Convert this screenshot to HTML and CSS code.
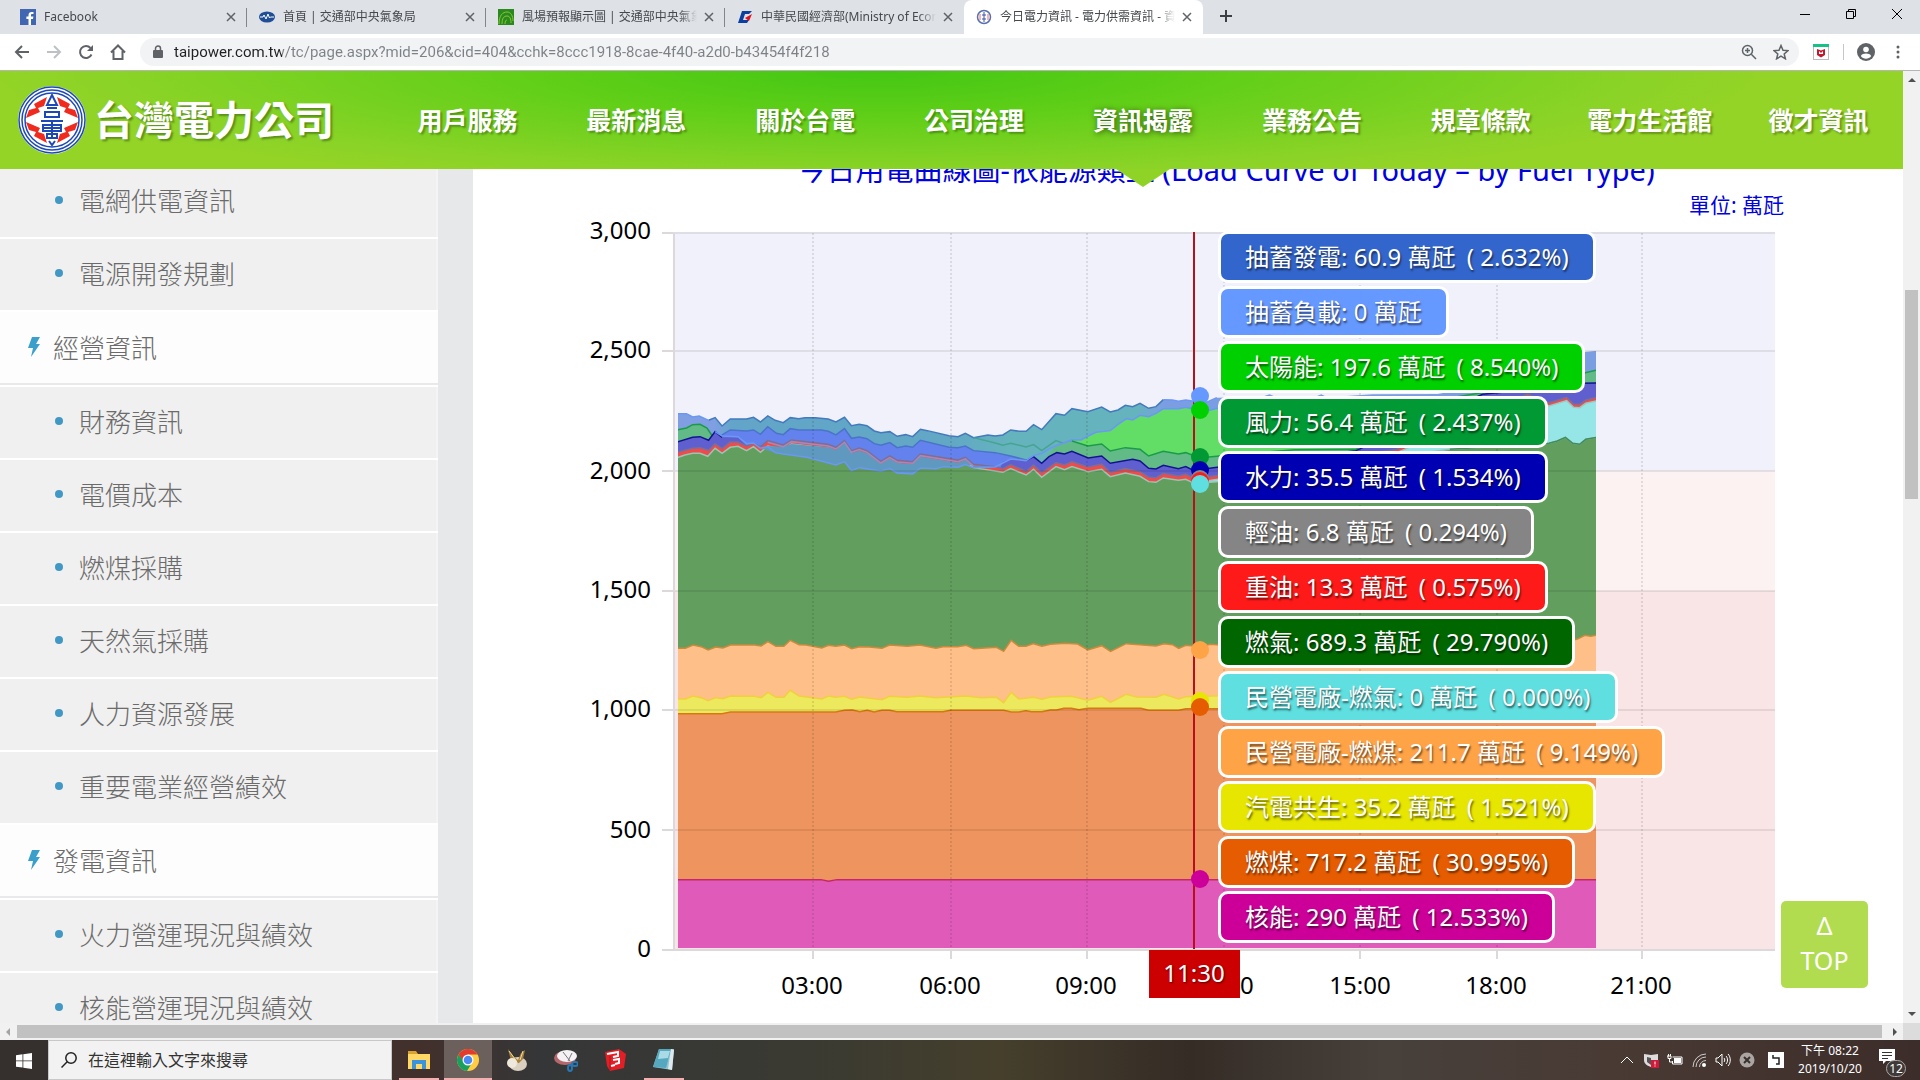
FILE: index.html
```
<!DOCTYPE html>
<html lang="zh-Hant">
<head>
    <meta charset="UTF-8">
    <meta name="viewport" content="width=device-width, initial-scale=1.0">
    <title>今日電力資訊 - 電力供需資訊 - 資訊揭露</title>
    <link rel="stylesheet" href="styles.css">
</head>
<body>
    <!-- Browser tabs -->
    <div class="tab-strip">
        <div class="tab">
            <svg class="favicon" viewBox="0 0 16 16"><rect width="16" height="16" fill="#4267b2"/><path d="M11 16V10h2l.4-2.400H11V6.300c0-.8.3-1.200 1.200-1.200h1.300V3c-.4 0-1-.1-1.800-.1C9.700 2.900 8.500 4 8.500 6v1.600H6.400V10h2.100v6z" fill="#fff"/></svg>
            <span class="tab-title">Facebook</span>
            <button class="tab-close" aria-label="關閉分頁"><svg viewBox="0 0 10 10"><path d="M1 1l8 8M9 1l-8 8"/></svg></button>
        </div>
        <div class="tab">
            <svg class="favicon" viewBox="0 0 16 16"><ellipse cx="8" cy="8" rx="8" ry="5.500" fill="#1f4e96"/><path d="M1 8h3l1-2 2 4 2-5 1.500 4 1-1H15" fill="none" stroke="#fff"/></svg>
            <span class="tab-title">首頁 | 交通部中央氣象局</span>
            <button class="tab-close" aria-label="關閉分頁"><svg viewBox="0 0 10 10"><path d="M1 1l8 8M9 1l-8 8"/></svg></button>
        </div>
        <div class="tab">
            <svg class="favicon" viewBox="0 0 16 16"><rect width="16" height="16" fill="#2b8a1e"/><path d="M1 15C1 6 5 3 9 3s6 4 6 9M4 15c0-6 2-8 5-8s4 3 4 7M7 15c0-3 1-4 2-4" fill="none" stroke="#8cc63a"/></svg>
            <span class="tab-title">風場預報顯示圖 | 交通部中央氣象局</span>
            <button class="tab-close" aria-label="關閉分頁"><svg viewBox="0 0 10 10"><path d="M1 1l8 8M9 1l-8 8"/></svg></button>
        </div>
        <div class="tab tab-last">
            <svg class="favicon" viewBox="0 0 16 16"><path d="M5 2h10l-3 3H8l-2 6h6l-2 3H1z" fill="#0b3fa0"/><path d="M15 5l-7 4 4 3z" fill="#e01020"/></svg>
            <span class="tab-title">中華民國經濟部(Ministry of Economic Affairs)</span>
            <button class="tab-close" aria-label="關閉分頁"><svg viewBox="0 0 10 10"><path d="M1 1l8 8M9 1l-8 8"/></svg></button>
        </div>
        <div class="tab tab-active">
            <svg class="favicon" viewBox="0 0 16 16"><circle cx="8" cy="8" r="6.500" fill="#fff" stroke="#5a6fae" stroke-width="1.500"/><path d="M8 3v10M6 6h4M6 10h4" stroke="#3b54b0"/><path d="M4 5v6M12 5v6" stroke="#e0707a"/></svg>
            <span class="tab-title">今日電力資訊 - 電力供需資訊 - 資訊揭露</span>
            <button class="tab-close" aria-label="關閉分頁"><svg viewBox="0 0 10 10"><path d="M1 1l8 8M9 1l-8 8"/></svg></button>
        </div>
        <button class="new-tab" aria-label="新分頁"><svg viewBox="0 0 12 12"><path d="M6 0v12M0 6h12"/></svg></button>
        <div class="window-buttons">
            <button aria-label="最小化"><svg viewBox="0 0 10 10"><path d="M0 5.500h10"/></svg></button>
            <button aria-label="還原"><svg viewBox="0 0 10 10"><path d="M.5 2.500h7v7h-7zM2.500 2.500v-2h7v7h-2"/></svg></button>
            <button aria-label="關閉"><svg viewBox="0 0 10 10"><path d="M0 0l10 10M10 0L0 10"/></svg></button>
        </div>
    </div>

    <!-- Address bar -->
    <div class="toolbar">
        <button class="tool" aria-label="上一頁"><svg viewBox="0 0 16 16"><path d="M15 8H2M8 2L2 8l6 6"/></svg></button>
        <button class="tool tool-off" aria-label="下一頁"><svg viewBox="0 0 16 16"><path d="M1 8h13M8 2l6 6-6 6"/></svg></button>
        <button class="tool" aria-label="重新載入"><svg viewBox="0 0 16 16"><path d="M13.500 10.500A6 6 0 1 1 12.500 4"/><path d="M15 1v6H9z" fill="#5f6368" stroke="none"/></svg></button>
        <button class="tool" aria-label="首頁"><svg viewBox="0 0 16 16"><path d="M1 8.500L8 1.500l7 7M3.500 7v8h9V7"/></svg></button>
        <div class="omnibox">
            <svg class="lock" viewBox="0 0 10 14"><rect x="0" y="5" width="10" height="8" rx="1" fill="#5f6368"/><path d="M2.500 5.500V3.500a2.500 2.500 0 0 1 5 0v2" fill="none" stroke="#5f6368" stroke-width="1.500"/></svg>
            <input class="url" type="text" aria-label="網址" value="taipower.com.tw/tc/page.aspx?mid=206&amp;cid=404&amp;cchk=8ccc1918-8cae-4f40-a2d0-b43454f4f218">
            <button class="tool" aria-label="縮放"><svg viewBox="0 0 16 16"><g stroke-width="1.500"><circle cx="6.500" cy="6.500" r="5"/><path d="M10.300 10.300L15 15M4 6.500h5M6.500 4v5"/></g></svg></button>
            <button class="tool" aria-label="加入書籤"><svg viewBox="0 0 16 16"><path d="M8 1.500l2 4.700 5 .4-3.800 3.300 1.200 4.900L8 12.200l-4.400 2.600 1.200-4.900L1 6.600l5-.4z" stroke-width="1.500"/></svg></button>
        </div>
        <button class="tool tool-shield" aria-label="擴充功能"><svg viewBox="0 0 16 16"><g stroke="none"><rect width="16" height="16" fill="#bbb"/><rect x="1" y="1" width="14" height="14" fill="#fff"/><path d="M0 0h16v3H0z" fill="#17c287"/><path d="M4 5l4 1.500L12 5v6l-4 2.500L4 11z" fill="#c0182c"/><path d="M6 7v3h4V7L8 9z" fill="#fff"/></g></svg></button>
        <span class="tool-line"></span>
        <button class="tool tool-user" aria-label="使用者"><svg viewBox="0 0 18 18"><circle cx="9" cy="9" r="9" fill="#5f6368" stroke="none"/><circle cx="9" cy="6.500" r="2.800" fill="#fff" stroke="none"/><path d="M3.800 13c1-2 3-2.600 5.200-2.600s4.200.6 5.200 2.600C13 14.800 11 15.800 9 15.800S5 14.800 3.800 13z" fill="#fff" stroke="none"/></svg></button>
        <button class="tool tool-menu" aria-label="選單"><svg viewBox="0 0 16 16"><g fill="#5f6368" stroke="none"><circle cx="8" cy="3" r="1.500"/><circle cx="8" cy="8" r="1.500"/><circle cx="8" cy="13" r="1.500"/></g></svg></button>
    </div>

    <div class="viewport">
        <div class="page">
            <header class="site-header">
                <a class="logo" href="#">
                    <svg class="emblem" viewBox="0 0 68 68">
                        <circle cx="34" cy="34" r="34" fill="#fff"/>
                        <g fill="none" stroke="#1d49b8" stroke-width="1.500"><circle cx="34" cy="34" r="33"/><circle cx="34" cy="34" r="30"/><circle cx="34" cy="34" r="27"/></g>
                        <g fill="#f02a1c">
                            <path d="M29 11L16 18l2 4-7 2-3 8 14-6-2-4 6-2z"/>
                            <path d="M39 11l13 7-2 4 7 2 3 8-14-6 2-4-6-2z"/>
                            <path d="M29 57l-13-7 2-4-7-2-3-8 14 6-2 4 6 2z"/>
                            <path d="M39 57l13-7-2-4 7-2 3-8-14 6 2 4-6 2z"/>
                        </g>
                        <g fill="none" stroke="#1d49b8" stroke-width="2"><path d="M34 9l-5 10h10zM29 22h10M27 26h14v5H27zM23 35h22M25 39h18v6H25zM25 42h18M34 35v18M29 48h10v4H29zM31 55l3 4 3-4"/></g>
                    </svg>
                    <span class="logo-text">台灣電力公司</span>
                </a>
                <nav class="main-nav">
                    <a href="#">用戶服務</a>
                    <a href="#">最新消息</a>
                    <a href="#">關於台電</a>
                    <a href="#">公司治理</a>
                    <a class="current" href="#">資訊揭露</a>
                    <a href="#">業務公告</a>
                    <a href="#">規章條款</a>
                    <a href="#">電力生活館</a>
                    <a href="#">徵才資訊</a>
                </nav>
            </header>

            <div class="content">
                <aside class="sidebar">
                    <ul class="side-menu">
                        <li><a href="#">電網供電資訊</a></li>
                        <li><a href="#">電源開發規劃</a></li>
                        <li class="group"><a href="#"><svg viewBox="0 0 12 20"><path d="M4 0h8L8 7h4L3 20l2-9H0z"/></svg>經營資訊</a></li>
                        <li><a href="#">財務資訊</a></li>
                        <li><a href="#">電價成本</a></li>
                        <li><a href="#">燃煤採購</a></li>
                        <li><a href="#">天然氣採購</a></li>
                        <li><a href="#">人力資源發展</a></li>
                        <li><a href="#">重要電業經營績效</a></li>
                        <li class="group"><a href="#"><svg viewBox="0 0 12 20"><path d="M4 0h8L8 7h4L3 20l2-9H0z"/></svg>發電資訊</a></li>
                        <li><a href="#">火力營運現況與績效</a></li>
                        <li><a href="#">核能營運現況與績效</a></li>
                    </ul>
                </aside>

                <main class="main">
                    <h2 class="chart-title">今日用電曲線圖-依能源類型 (Load Curve of Today – by Fuel Type)</h2>
                    <p class="unit">單位: 萬瓩</p>
                    <div class="chart">
                        <svg class="chart-svg" viewBox="473 215 1430 808">
                            <!-- background bands -->
                            <path d="M673 232h1102v239H673z" fill="#f1f1fb"/>
                            <path d="M673 471h1102v120H673z" fill="#fbf2f1"/>
                            <path d="M673 591h1102v358H673z" fill="#f9e5e5"/>
                            <defs>
                                <linearGradient id="pump">
                                    <stop offset="0" stop-color="#7f9fe2"/>
                                    <stop offset=".04" stop-color="#7f9fe2"/>
                                    <stop offset=".06" stop-color="#62a5c8"/>
                                    <stop offset=".3" stop-color="#62a8c5"/>
                                    <stop offset=".36" stop-color="#65b3bd"/>
                                    <stop offset=".5" stop-color="#65b3bd"/>
                                    <stop offset=".53" stop-color="#7b9ee3"/>
                                    <stop offset="1" stop-color="#7b9ee3"/>
                                </linearGradient>
                                <clipPath id="plot"><rect x="678" y="232" width="918" height="716"/></clipPath>
                            </defs>

                            <g clip-path="url(#plot)">
                            <!-- upper series: pumped storage, solar, wind, hydro, oil, gas -->
                            <g class="series" transform="translate(560 200) scale(.4082 .3333)">
                                <path fill="url(#pump)" d="M287 2247V641L310 641 325 651 341 648 364 661 380 653 397 678 417 657 457 657 474 652 491 666 509 648 527 661 547 668 564 653 585 656 600 653 625 653 657 657 676 666 697 652 714 677 733 673 752 677 770 693 786 698 808 695 826 709 847 704 864 710 883 688 900 692 953 707 975 710 993 700 1013 713 1048 705 1066 708 1085 705 1104 690 1125 694 1142 694 1160 674 1180 689 1215 641 1236 646 1254 626 1293 635 1327 621 1348 636 1367 630 1385 616 1403 620 1421 610 1442 625 1460 620 1478 599 1500 600 1515 604 1533 600 1553 604 1583 607 1609 593 1720 590 1738 583 1756 592 1850 590 1865 583 1880 592 1990 583 2150 582 2250 560 2400 500 2510 456 2541 453V2247z"/>
                                <path fill="none" stroke="#4379bd" d="M364 661L380 653 397 678 417 657 457 657 474 652 491 666 509 648 527 661 547 668 564 653 585 656 600 653 625 653 657 657 676 666 697 652 714 677 733 673 752 677 770 693 786 698 808 695 826 709 847 704 864 710 883 688 900 692 953 707 975 710 993 700 1013 713 1048 705 1066 708 1085 705 1104 690 1125 694 1142 694 1160 674 1180 689 1215 641 1236 646 1254 626 1293 635 1327 621 1348 636 1367 630 1385 616 1403 620 1421 610 1442 625 1460 620 1478 599"/>
                                <path fill="none" stroke="#6b97f5" d="M287 641L310 641 325 651 341 648 364 661M1478 599L1500 600 1515 604 1533 600 1553 604 1583 607 1609 593"/>
                                <path fill="#62dd66" stroke="#6b97f5" d="M1200 780L1220 735 1254 720 1276 720 1294 708 1313 697 1348 692 1367 673 1388 656 1403 660 1421 646 1442 650 1460 640 1478 626 1515 626 1533 622 1553 628 1583 634 1609 625 1700 640 1900 650 2100 640 2200 610 2300 600V840H1200z"/>
                                <path fill="#62bb87" stroke="#1b9b4a" d="M287 900V690L310 684 325 674 343 673 360 684 380 720V900z"/>
                                <path fill="none" stroke="#45a590" d="M1013 713L1066 729 1085 736 1104 730 1142 741 1160 734 1180 752 1215 722 1236 731 1254 723"/>
                                <path fill="#62bb87" d="M1180 790L1215 735 1254 723 1293 738 1327 732 1348 753 1385 743 1421 748 1442 768 1478 754 1515 762 1533 758 1553 767 1590 771 1640 765 1800 749 1950 748 2150 600 2400 550 2541 510V900H1180z"/>
                                <path fill="none" stroke="#1b9b4a" d="M1254 723L1293 738 1327 732 1348 753 1385 743 1421 748 1442 768 1478 754 1515 762 1533 758 1553 767 1590 771 1640 765 1800 749 1950 748 2150 600 2400 550 2541 510"/>
                                <path fill="#6482ee" stroke="#4a74c8" d="M380 800L397 705 417 690 457 693 474 690 491 703 509 680 530 700 547 704 564 686 585 690 640 690 657 694 676 705 697 686 714 715 733 711 752 716 770 731 786 736 808 728 826 743 847 738 864 742 883 721 953 742 975 743 993 738 1013 752 1066 758 1104 768 1142 780 1142 840H380z"/>
                                <path fill="#5f5fd0" d="M287 900V726L325 712 343 710 364 721 380 695 397 712 436 712 460 740V900zM1066 840L1085 785 1104 777 1142 782 1160 770 1180 790 1198 770 1217 758 1236 762 1254 754 1294 774 1327 768 1348 790 1403 778 1421 783 1442 805 1460 807 1478 796 1515 806 1533 800 1553 812 1600 803 1950 752 2260 583 2400 565 2500 550 2541 549V950H1066z"/>
                                <path fill="none" stroke="#13138f" d="M287 726L325 712 343 710 364 721 380 695 397 712M1142 782L1160 770 1180 790 1198 770 1217 758 1236 762 1254 754 1294 774 1327 768 1348 790 1403 778 1421 783 1442 805 1460 807 1478 796 1515 806 1533 800 1553 812 1600 803 1950 752 2260 583 2400 565 2500 550 2541 549"/>
                                <path fill="#f04a4a" stroke="#77719a" d="M287 900V757L325 745 343 743 364 751 380 731 397 746 417 726 436 726 457 738 474 731 491 740 509 722 547 735 567 720 657 733 676 742 697 722 714 752 733 744 752 752 786 784 808 768 826 781 864 785 883 762 975 780 993 772 1013 793 1066 800 1085 806 1104 794 1142 814 1160 795 1180 818 1215 788 1236 795 1254 785 1294 801 1327 792 1348 817 1385 806 1421 815 1442 831 1460 833 1478 820 1515 828 1533 822 1553 835 1600 828 2050 748 2370 583 2423 608 2466 592 2483 612 2498 613 2513 600 2541 592V950z"/>
                                <path fill="#96e6e8" stroke="#9ec7c4" d="M1553 850L1600 840 2050 758 2370 593 2423 618 2466 602 2483 622 2498 623 2513 610 2541 602V950H1553z"/>
                                <path fill="#629e5e" stroke="#9cc4b4" d="M287 2247V773L306 765 325 760 343 760 362 769 380 745 397 760 417 742 436 739 457 752 474 740 491 757 509 738 547 748 567 732 657 745 676 754 697 734 714 764 733 756 752 764 786 796 808 780 826 793 864 797 883 774 975 792 993 784 1013 803 1066 813 1085 817 1104 806 1142 825 1160 808 1180 832 1215 800 1236 809 1254 800 1294 815 1327 808 1348 830 1385 819 1421 829 1442 845 1460 847 1478 834 1515 841 1533 838 1553 850 1610 845 2180 748 2423 730 2443 723 2463 712 2481 730 2498 733 2513 718 2541 712V2247z"/>
                                <path fill="none" stroke="#3f8c5c" d="M2180 748L2423 730 2443 723 2463 712 2481 730 2498 733 2513 718 2541 712"/>
                                <!-- pumping load, drawn down over the gas area during the night -->
                                <path fill="#5f99c0" d="M491 745L509 738 547 740 567 732 657 742 676 750 697 730 714 760 733 752 752 760 786 792 808 776 826 789 864 793 883 770 975 788 993 780 1013 800 1066 801 993 794 975 802 940 800 921 806 883 804 864 822 826 819 808 806 786 813 733 803 714 812 697 785 676 795 605 772 547 762 527 758z"/>
                                <path fill="none" stroke="#a08abf" d="M509 727L547 740 567 725 657 738 676 747 697 727 714 757 733 749 752 757 786 789 808 773 826 786 864 790 883 767 975 785 993 777 1013 798"/>
                                <path fill="none" stroke="#6b97f5" d="M380 695L397 708 436 710 457 731 474 729 491 745 509 740 527 758 547 762 605 772 676 795 697 785 714 812 733 803 786 813 808 806 826 819 864 822 883 804 921 806 940 800 975 802 993 794 1013 803 1066 801 1104 777 1142 782 1160 767 1180 760 1200 745 1220 735 1254 720"/>
                            </g>

                            <!-- lower series: IPP coal, cogeneration, coal, nuclear -->
                            <g class="series" transform="translate(560 600) scale(.4209 .3333)">
                                <path fill="#febf88" stroke="#cc8a3c" d="M277 1047V145L298 145 316 135 335 140 352 150 370 141 387 144 405 135 462 135 478 138 494 125 513 139 532 139 547 121 568 134 585 135 622 144 638 136 655 139 676 135 693 146 712 140 735 141 765 145 783 135 825 139 855 135 893 145 910 140 945 140 965 136 983 146 1037 142 1054 154 1072 121 1090 139 1107 139 1125 131 1145 139 1165 133 1200 130 1230 132 1254 150 1287 137 1308 154 1345 131 1416 138 1435 131 1455 134 1470 145 1487 136 1521 140 1545 133 1568 135 2380 125 2416 118 2435 106 2449 109 2464 105V1047z"/>
                                <path fill="#ece95e" stroke="#f2cf3f" d="M277 1047V297L298 297 316 288 335 293 352 302 370 293 387 296 405 288 462 289 478 293 494 277 513 292 532 292 547 271 568 288 622 297 638 288 655 292 676 289 693 298 712 291 765 299 783 289 825 292 855 288 893 293 965 288 1000 293 1037 292 1054 308 1072 277 1090 297 1125 292 1145 298 1165 291 1215 289 1254 301 1287 289 1308 307 1345 283 1370 291 1416 292 1435 283 1470 297 1487 290 1568 287 2464 287V1047z"/>
                                <path fill="#ee945e" stroke="#d9780f" d="M277 1047V341L385 341 405 336 655 336 676 331 695 330 712 335 730 331 746 336 765 331 783 331 800 335 910 335 928 331 1054 331 1072 336 1090 336 1107 332 1120 335 1145 335 1165 330 1180 330 1197 325 1215 325 1233 329 1254 325 1380 325 1398 331 1470 331 1487 326 1568 326 2464 325V1047z"/>
                                <path fill="#df5ab9" stroke="#c4286a" d="M277 1047V839L620 839 638 844 658 839 2464 839V1047z"/>
                            </g>
                            </g>

                            <!-- grid and axes -->
                            <g fill="none" stroke="#000" stroke-opacity=".08" stroke-width="2">
                                <path d="M673 233h1102M673 351h1102M673 471h1102M673 591h1102M673 710h1102M673 830h1102"/>
                            </g>
                            <path class="grid-v" d="M813 233v716M951 233v716M1087 233v716M1224 233v716M1360 233v716M1497 233v716M1642 233v716"/>
                            <path d="M662 233h11M662 351h11M662 471h11M662 591h11M662 710h11M662 830h11M662 950h1113M674 233v717M813 950v9M951 950v9M1087 950v9M1224 950v9M1360 950v9M1497 950v9M1642 950v9" fill="none" stroke="#dcd8dc" stroke-width="2"/>
                            <g class="axis axis-y">
                                <text x="651" y="239">3,000</text>
                                <text x="651" y="358">2,500</text>
                                <text x="651" y="479">2,000</text>
                                <text x="651" y="598">1,500</text>
                                <text x="651" y="717">1,000</text>
                                <text x="651" y="838">500</text>
                                <text x="651" y="957">0</text>
                            </g>
                            <g class="axis">
                                <text x="812" y="994">03:00</text>
                                <text x="950" y="994">06:00</text>
                                <text x="1086" y="994">09:00</text>
                                <text x="1223" y="994">12:00</text>
                                <text x="1360" y="994">15:00</text>
                                <text x="1496" y="994">18:00</text>
                                <text x="1641" y="994">21:00</text>
                            </g>

                            <!-- cursor -->
                            <path d="M1194 232v717" stroke="#b90f1c" stroke-width="2"/>
                            <circle cx="1200" cy="396" r="9" fill="#6699ff"/>
                            <circle cx="1200" cy="410" r="9" fill="#00d000"/>
                            <circle cx="1200" cy="457" r="9" fill="#009933"/>
                            <circle cx="1200" cy="470" r="9" fill="#0000b3"/>
                            <circle cx="1200" cy="479" r="9" fill="#888"/>
                            <circle cx="1200" cy="481" r="9" fill="#ff1a1a"/>
                            <circle cx="1200" cy="484" r="9" fill="#5fdfe0"/>
                            <circle cx="1200" cy="650" r="9" fill="#ffa347"/>
                            <circle cx="1200" cy="701" r="9" fill="#e6e600"/>
                            <circle cx="1200" cy="707" r="9" fill="#e65c00"/>
                            <circle cx="1200" cy="879" r="9" fill="#cc0099"/>
                            <rect x="1149" y="950" width="91" height="48" fill="#cc0000"/>
                            <text class="cursor-time" x="1194" y="982">11:30</text>
                        </svg>

                        <ul class="balloons">
                            <li class="pump-gen">抽蓄發電: 60.9 萬瓩 <span>( 2.632%)</span></li>
                            <li class="pump-load">抽蓄負載: 0 萬瓩</li>
                            <li class="solar">太陽能: 197.6 萬瓩 <span>( 8.540%)</span></li>
                            <li class="wind">風力: 56.4 萬瓩 <span>( 2.437%)</span></li>
                            <li class="hydro">水力: 35.5 萬瓩 <span>( 1.534%)</span></li>
                            <li class="diesel">輕油: 6.8 萬瓩 <span>( 0.294%)</span></li>
                            <li class="fuel-oil">重油: 13.3 萬瓩 <span>( 0.575%)</span></li>
                            <li class="gas">燃氣: 689.3 萬瓩 <span>( 29.790%)</span></li>
                            <li class="ipp-gas">民營電廠-燃氣: 0 萬瓩 <span>( 0.000%)</span></li>
                            <li class="ipp-coal">民營電廠-燃煤: 211.7 萬瓩 <span>( 9.149%)</span></li>
                            <li class="cogen">汽電共生: 35.2 萬瓩 <span>( 1.521%)</span></li>
                            <li class="coal">燃煤: 717.2 萬瓩 <span>( 30.995%)</span></li>
                            <li class="nuclear">核能: 290 萬瓩 <span>( 12.533%)</span></li>
                        </ul>
                    </div>
                </main>
            </div>
            <a class="go-top" href="#">Δ<br>TOP</a>
        </div>

        <div class="scroll-y">
            <svg viewBox="0 0 8 4"><path d="M0 4l4-4 4 4z"/></svg>
            <span class="thumb"></span>
            <svg viewBox="0 0 8 4"><path d="M0 0l4 4 4-4z"/></svg>
        </div>
        <div class="scroll-x">
            <svg viewBox="0 0 4 8"><path d="M4 0L0 4l4 4z" fill="#a3a3a3"/></svg>
            <span class="thumb"></span>
            <svg viewBox="0 0 4 8"><path d="M0 0l4 4-4 4z"/></svg>
        </div>
        <div class="scroll-corner"></div>
    </div>

    <!-- Taskbar -->
    <footer class="taskbar">
        <button class="start" aria-label="開始"><svg viewBox="0 0 16 16"><path d="M0 2.200L6.500 1.300v6.200H0zM7.300 1.200L16 0v7.500H7.300zM0 8.300h6.500v6.300L0 13.700zM7.300 8.300H16V16l-8.700-1.300z" fill="#fff"/></svg></button>
        <label class="search">
            <svg viewBox="0 0 16 16"><circle cx="10" cy="6" r="5.200"/><path d="M6.200 9.800L.5 15.500"/></svg>
            <input type="text" placeholder="在這裡輸入文字來搜尋" aria-label="搜尋">
        </label>
        <div class="apps">
            <button class="app open" aria-label="檔案總管"><svg viewBox="0 0 24 24"><path d="M1 3h8l2 3h12v15H1z" fill="#dca32c"/><path d="M1 6h22v15H1z" fill="#ffd866"/><path d="M5 21v-9h14v9h-4v-5H9v5z" fill="#3a94dc"/></svg></button>
            <button class="app open active" aria-label="Chrome"><svg viewBox="0 0 24 24"><circle cx="12" cy="12" r="11" fill="#ffcd42"/><path d="M2.500 6.500A11 11 0 0 1 21.500 6.500H12L7.500 15z" fill="#e33b2e"/><path d="M2.500 6.500A11 11 0 0 0 11 23l5.500-9H8z" fill="#18a05e"/><circle cx="12" cy="12" r="5.500" fill="#fff"/><circle cx="12" cy="12" r="4.300" fill="#4a8af4"/></svg></button>
            <button class="app" aria-label="相片"><svg viewBox="0 0 24 24"><ellipse cx="13" cy="16" rx="9" ry="7" fill="#d9d0c0"/><path d="M3 1l6 8 4 3 3-7 4-3-2 9-4 4-5 1-4-7z" fill="#a9803c"/><path d="M4 3l6 8 3 5M18 3l-3 9" fill="none" stroke="#f0d9a0"/><circle cx="7" cy="15" r="5" fill="#efe9dd"/></svg></button>
            <button class="app" aria-label="剪取工具"><svg viewBox="0 0 24 24"><ellipse cx="11" cy="10" rx="11" ry="7" fill="#b5686c"/><ellipse cx="13" cy="8" rx="10" ry="6" fill="#f4f2f4"/><path d="M9 4l7 9M18 5l-4 8" stroke="#777"/><g fill="none" stroke="#2878b4" stroke-width="2"><ellipse cx="16" cy="20" rx="2" ry="3"/><ellipse cx="21" cy="16" rx="3" ry="2"/></g></svg></button>
            <button class="app" aria-label="SketchUp"><svg viewBox="0 0 24 24"><path d="M2 4l14-3 7 5-2 14-14 3-3-5z" fill="#e21f26"/><path d="M7 8V22" stroke="#b3151b"/><path d="M4 6l11-2v4l-5 1M10 12l6-1v4l-4 1M8 18l4-1" fill="none" stroke="#fff" stroke-width="2"/></svg></button>
            <button class="app open" aria-label="記事本"><svg viewBox="0 0 24 24"><path d="M7 1h15l-2 21-19-3z" fill="#8fc4d4"/><path d="M7 1h12l-5 19-13-1z" fill="#56a8bf"/><path d="M8 3h10l-2 7-10 1z" fill="#a8dbe6"/><path d="M19 1l3 1-2 20-4-1z" fill="#dfe9ec"/></svg></button>
        </div>
        <div class="tray">
            <svg viewBox="0 0 16 16"><path d="M2 11l6-6 6 6"/></svg>
            <svg viewBox="0 0 16 16"><path d="M1 2l7 1 7-1v6c0 4-4 6-7 7-3-1-7-3-7-7z" fill="#ddd" stroke="none"/><path d="M4 5v5l4 3V6z" fill="#555" stroke="none"/><rect x="8" y="8" width="8" height="8" fill="#d01a3c" stroke="none"/><path d="M12 9.500v3M12 13.500v1"/></svg>
            <svg viewBox="0 0 16 16"><path d="M5.500 5H15v7H5.500V9"/><rect x="7" y="6" width="7" height="5" fill="#fff" stroke="none"/><path d="M0 4h4v2.500H1V4M1.500 2v2M3.500 2v2M2.500 7v3h3"/></svg>
            <svg viewBox="0 0 16 16"><path d="M2 15A13 13 0 0 1 15 2M5 15A10 10 0 0 1 15 5M8.500 15A6.500 6.500 0 0 1 15 8.500" stroke="#ccc"/><circle cx="13" cy="13" r="2" fill="#fff" stroke="none"/></svg>
            <svg viewBox="0 0 16 16"><path d="M1 6h2l4-4v12l-4-4H1zM9 6c1 1 1 3 0 4M11 4c2 2 2 6 0 8M13 2c3 3 3 9 0 12"/></svg>
            <svg viewBox="0 0 16 16"><circle cx="8" cy="8" r="7.500" fill="#aaa5a3" stroke="none"/><path d="M5 5l6 6M11 5l-6 6" stroke="#3a302e" stroke-width="2"/></svg>
            <svg class="ime" viewBox="0 0 16 16"><rect width="16" height="16" fill="#fff" stroke="none"/><path d="M5 3v3h6v6H8" stroke="#222" stroke-width="1.500"/></svg>
            <div class="clock"><span>下午 08:22</span><span>2019/10/20</span></div>
            <div class="notice">
                <svg viewBox="0 0 16 16"><path d="M0 0h16v12H7l-3 3v-3H0z" fill="#fff" stroke="none"/><path d="M3 3.500h10M3 6.500h10M3 9.500h6" stroke="#3a302e"/></svg>
                <span class="badge">12</span>
            </div>
        </div>
    </footer>
</body>
</html>
```
FILE: styles.css
```
* {
    box-sizing: border-box;
}
html, body {
    height: 100%;
    margin: 0;
}
body {
    display: flex;
    flex-direction: column;
    overflow: hidden;
    font-family: "Noto Sans", "Noto Sans CJK TC", sans-serif;
    font-size: 12px;
    color: #333;
    background: #fff;
}
button {
    border: 0;
    padding: 0;
    background: none;
    font: inherit;
}
a {
    text-decoration: none;
}
ul {
    list-style: none;
    margin: 0;
    padding: 0;
}

/* tabs */
.tab-strip {
    display: flex;
    height: 34px;
    padding-left: 8px;
    background: #dee1e6;
}
.tab {
    position: relative;
    display: flex;
    align-items: center;
    flex: 0 1 239px;
    min-width: 0;
    padding: 0 8px 0 12px;
}
.tab::after {
    content: "";
    position: absolute;
    right: 0;
    top: 8px;
    width: 1px;
    height: 19px;
    background: #80868b;
}
.tab-last::after, .tab-active::after {
    display: none;
}
.tab-active {
    background: #fff;
    border-radius: 8px 8px 0 0;
}
.favicon {
    flex: none;
    width: 16px;
    height: 16px;
    margin-right: 8px;
}
.tab-title {
    flex: 1;
    overflow: hidden;
    white-space: nowrap;
    line-height: 20px;
    color: #45494d;
    -webkit-mask-image: linear-gradient(to right, #000 90%, transparent);
    mask-image: linear-gradient(to right, #000 90%, transparent);
}
.tab-close {
    display: flex;
    justify-content: center;
    width: 16px;
    margin-left: 4px;
}
.tab-close svg {
    width: 10px;
    height: 10px;
    stroke: #5f6368;
    stroke-width: 1.5;
}
.new-tab {
    width: 46px;
}
.new-tab svg {
    width: 12px;
    height: 12px;
    stroke: #3c4043;
    stroke-width: 2;
}
.window-buttons {
    display: flex;
    margin-left: auto;
    height: 28px;
}
.window-buttons button {
    width: 46px;
}
.window-buttons svg {
    width: 10px;
    height: 10px;
    fill: none;
    stroke: #000;
}

/* toolbar */
.toolbar {
    display: flex;
    align-items: center;
    height: 37px;
    padding: 0 6px 1px 6px;
    border-bottom: 1px solid #b4b6b4;
    background: #fff;
}
.tool {
    display: flex;
    align-items: center;
    justify-content: center;
    width: 32px;
    height: 28px;
}
.tool svg {
    width: 16px;
    height: 16px;
    fill: none;
    stroke: #5f6368;
    stroke-width: 2;
}
.tool-off svg {
    stroke: #bdc1c6;
}
.omnibox {
    display: flex;
    align-items: center;
    flex: 1;
    height: 28px;
    margin: 0 6px;
    padding: 0 2px 0 13px;
    border-radius: 14px;
    background: #f1f3f4;
}
.lock {
    width: 10px;
    height: 14px;
}
.url {
    flex: 1;
    height: 24px;
    margin-left: 11px;
    padding: 0;
    border: 0;
    font: 15px Roboto, sans-serif;
    color: transparent;
    background: linear-gradient(to right, #202124 108px, #7d8186 108px);
    -webkit-background-clip: text;
    background-clip: text;
}
.tool-line {
    width: 1px;
    height: 16px;
    margin: 0 6px;
    background: #c4c7cb;
}
.tool-user svg {
    width: 18px;
    height: 18px;
}

/* page area with its scrollbars */
.viewport {
    display: grid;
    grid-template-columns: minmax(0, 1fr) 17px;
    grid-template-rows: minmax(0, 1fr) 17px;
    flex: 1;
    min-height: 0;
}
.page {
    position: relative;
    display: flex;
    flex-direction: column;
    overflow: hidden;
}
.scroll-x, .scroll-y {
    display: flex;
    align-items: center;
    background: #f1f1f1;
}
.scroll-x {
    grid-row: 2;
    grid-column: 1;
    padding: 0 6px;
}
.scroll-y {
    grid-row: 1;
    grid-column: 2;
    flex-direction: column;
    justify-content: space-between;
    padding: 7px 0;
    position: relative;
}
.scroll-x svg {
    width: 4px;
    height: 8px;
}
.scroll-y svg {
    width: 8px;
    height: 4px;
}
.scroll-x svg, .scroll-y svg {
    fill: #505050;
}
.thumb {
    background: #c1c1c1;
}
.scroll-x .thumb {
    flex: 1;
    height: 13px;
    margin: 0 11px 0 7px;
}
.scroll-y .thumb {
    position: absolute;
    top: 23%;
    width: 13px;
    height: 22%;
}
.scroll-corner {
    background: #dcdcdc;
}

/* site header */
.site-header {
    position: relative;
    z-index: 2;
    display: flex;
    flex: none;
    height: 98px;
    background: radial-gradient(ellipse 900px 120px at 46% 0, #43c714 0, #62cf18 40%, #8bd327 85%, #94d426 100%);
}
.logo {
    display: flex;
    align-items: center;
    flex: none;
    width: 383px;
    padding-left: 18px;
}
.emblem {
    width: 68px;
    height: 68px;
    margin-right: 8px;
}
.logo-text {
    font-size: 40px;
    line-height: 50px;
    font-weight: 700;
    color: #fff;
    text-shadow: 2px 2px 2px #5b8f1a;
}
.main-nav {
    display: grid;
    grid-template-columns: repeat(9, 1fr);
    flex: 1;
}
.main-nav a {
    position: relative;
    display: flex;
    align-items: center;
    justify-content: center;
    padding-bottom: 2px;
    font-size: 25px;
    font-weight: 700;
    white-space: nowrap;
    color: #fff;
    text-shadow: 2px 2px 2px rgba(0, 0, 0, .3);
}
.main-nav .current {
    text-shadow: 1px 1px 6px rgba(0, 0, 0, .6);
}
.main-nav .current::after {
    content: "";
    position: absolute;
    top: 100%;
    left: 50%;
    margin-left: -27px;
    border: 27px solid transparent;
    border-top: 18px solid #90d327;
    border-bottom: 0;
}

/* sidebar */
.content {
    display: flex;
    flex: 1;
    min-height: 0;
}
.sidebar {
    flex: none;
    width: 473px;
    padding-right: 35px;
    background: #e7e8ea;
}
.side-menu {
    margin-top: -3px;
}
.side-menu a {
    display: flex;
    align-items: center;
    height: 73px;
    padding: 0 0 3px 55px;
    border-bottom: 2px solid #fff;
    font-size: 26px;
    font-weight: 300;
    color: #6b6b6b;
    background: #f0f0f0;
    box-shadow: inset -2px 0 #f4f4f6;
}
.side-menu a::before {
    content: "";
    width: 8px;
    height: 8px;
    margin-right: 16px;
    border-radius: 50%;
    background: #4198c4;
}
.side-menu .group a {
    height: 75px;
    padding-left: 28px;
    background: #fdfdfd;
    box-shadow: inset 0 -2px #e9e9eb;
}
.side-menu .group a::before {
    display: none;
}
.side-menu svg {
    width: 12px;
    height: 20px;
    margin-right: 13px;
    fill: #3b9fcc;
}

/* chart */
.main {
    flex: 1;
    min-width: 0;
    background: #fff;
}
.chart-title {
    margin: -20px 0 0;
    padding-left: 76px;
    font-size: 29px;
    line-height: 42px;
    font-weight: 400;
    text-align: center;
    white-space: nowrap;
    color: #0000e0;
}
.unit {
    margin: 0;
    padding: 4px 119px 0 0;
    font-size: 21px;
    line-height: 20px;
    text-align: right;
    color: #0000e0;
}
.chart {
    position: relative;
}
.chart-svg {
    display: block;
    width: 100%;
}
.series path {
    vector-effect: non-scaling-stroke;
    stroke-width: 1.5;
}
.grid-v {
    fill: none;
    stroke: #000;
    stroke-opacity: .2;
    stroke-dasharray: 2 2;
}
.axis {
    font-size: 24px;
    fill: #000;
    text-anchor: middle;
}
.axis-y {
    text-anchor: end;
}
.cursor-time {
    font-size: 24px;
    fill: #fff;
    text-anchor: middle;
    text-shadow: 1px 1px 2px #500;
}
.balloons {
    position: absolute;
    left: 745px;
    top: 16px;
    display: flex;
    flex-direction: column;
    align-items: flex-start;
    gap: 3px;
}
.balloons li {
    padding: 0 24px;
    border: 3px solid #fff;
    border-radius: 10px;
    font-size: 24px;
    line-height: 46px;
    white-space: nowrap;
    color: #fff;
    text-shadow: 1px 2px 2px rgba(0, 0, 0, .6);
}
.balloons span {
    margin-left: 5px;
}
.pump-gen { background: #3366cc; }
.pump-load { background: #6699ff; }
.solar { background: #00d000; }
.wind { background: #009933; }
.hydro { background: #0000b3; }
.diesel { background: #858585; }
.fuel-oil { background: #ff1a1a; }
.gas { background: #006600; }
.ipp-gas { background: #5fdfe0; }
.ipp-coal { background: #ffa347; }
.cogen { background: #e6e600; }
.coal { background: #e65c00; }
.nuclear { background: #cc0099; }

.go-top {
    position: absolute;
    right: 35px;
    bottom: 35px;
    width: 87px;
    height: 87px;
    padding-top: 7px;
    border-radius: 5px;
    font-size: 25px;
    line-height: 35px;
    text-align: center;
    color: #fff;
    background: #b2dc50;
}

/* taskbar */
.taskbar {
    display: flex;
    flex: none;
    height: 40px;
    background: linear-gradient(to right, #42302c 0, #42302c 22%, #353637 28%, #3a3a32 42%, #453f2c 52%, #352c26 62%, #47403b 72%, #493a34 84%, #3c2d2a 100%);
}
.start {
    width: 48px;
    background: #35302d;
}
.start svg {
    width: 16px;
    height: 16px;
    vertical-align: middle;
}
.search {
    display: flex;
    align-items: center;
    width: 344px;
    padding-left: 12px;
    border: 1px solid #c8c8c8;
    background: #f2f2f2;
}
.search svg {
    width: 16px;
    height: 16px;
    margin-right: 11px;
    fill: none;
    stroke: #222;
    stroke-width: 1.5;
}
.search input {
    flex: 1;
    min-width: 0;
    padding: 0;
    border: 0;
    font: 16px "Noto Sans", "Noto Sans CJK TC", sans-serif;
    background: none;
}
.search input::placeholder {
    color: #333;
}
.apps {
    display: flex;
    gap: 1px;
    padding-left: 3px;
}
.app {
    position: relative;
    width: 48px;
}
.app svg {
    width: 24px;
    height: 24px;
    vertical-align: middle;
}
.app.active {
    background: #6b605c;
}
.app.open::after {
    content: "";
    position: absolute;
    left: 4px;
    right: 4px;
    bottom: 0;
    height: 2px;
    background: #f4b0b0;
}
.app.active::after {
    left: 0;
    right: 0;
}
.tray {
    display: flex;
    align-items: center;
    gap: 8px;
    margin-left: auto;
    padding-right: 13px;
    color: #fff;
}
.tray svg {
    width: 16px;
    height: 16px;
    fill: none;
    stroke: #fff;
}
.tray .ime {
    margin-left: 5px;
}
.clock {
    display: flex;
    flex-direction: column;
    align-items: center;
    width: 76px;
    line-height: 18px;
}
.notice {
    position: relative;
    width: 31px;
    height: 26px;
}
.notice svg {
    margin: 2px 0 0 3px;
}
.badge {
    position: absolute;
    right: 1px;
    bottom: -4px;
    width: 20px;
    height: 17px;
    border: 1px solid #aaa;
    border-radius: 9px;
    line-height: 15px;
    text-align: center;
    background: #3f3937;
}
```
